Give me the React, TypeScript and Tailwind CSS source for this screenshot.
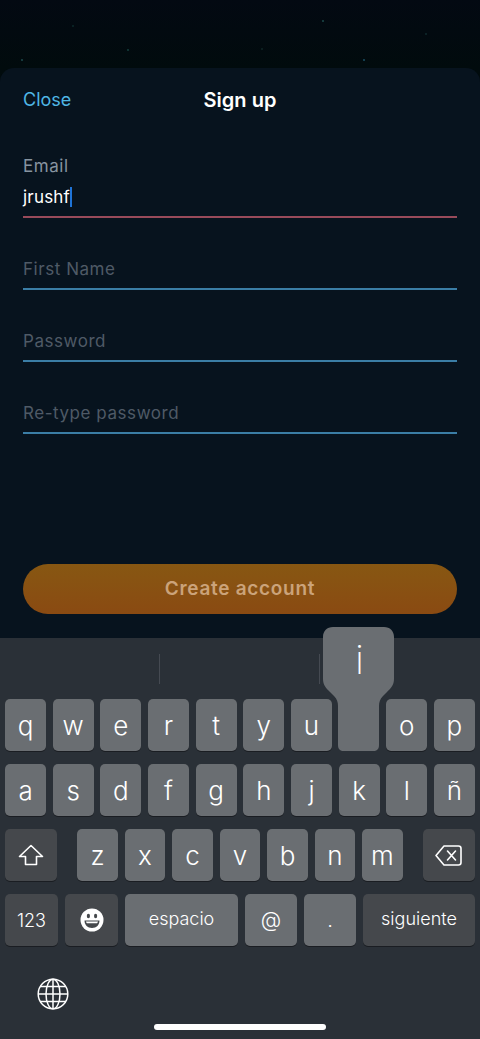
const STARS = [
  { x: 72, y: 25, c: 'bg-[#0c2a2a]' },
  { x: 322, y: 20, c: 'bg-[#1c4a4a]' },
  { x: 425, y: 33, c: 'bg-[#0f2a2c]' },
  { x: 127, y: 49, c: 'bg-[#14403e]' },
  { x: 261, y: 48, c: 'bg-[#0f2626]' },
  { x: 21, y: 59, c: 'bg-[#1c4a4c]' },
  { x: 363, y: 59, c: 'bg-[#1a4f63]' },
];

function Field({ label, value, error }: { label: string; value?: string; error?: boolean }) {
  return (
    <div className="flex h-[72px] flex-col justify-end tracking-[0.55px]">
      {value !== undefined ? (
        <>
          <div className="mb-[5px] h-[26px] text-[17px] leading-[26px] text-[#8794a0]">{label}</div>
          <div className="flex h-[26px] items-center text-[17px] leading-[26px] tracking-[0.2px] text-white">
            {value}
            <span className="h-[20px] w-[2px] bg-[#1f74d8]" />
          </div>
        </>
      ) : (
        <div className="h-[26px] text-[17px] leading-[26px] text-[#4f5a66]">{label}</div>
      )}
      <div className={`mt-[6px] h-[2px] ${error ? 'bg-[#984a5a]' : 'bg-[#3b7ea6]'}`} />
    </div>
  );
}

function Key({ label, className = '' }: { label: string; className?: string }) {
  return (
    <div
      className={`flex h-[52px] items-center justify-center rounded-[5px] bg-[#6a6e72] text-[26px] font-light text-white shadow-[0_1px_0_#1a1d22] ${className}`}
    >
      {label}
    </div>
  );
}

function DarkKey({ children, className = '' }: { children: React.ReactNode; className?: string }) {
  return (
    <div
      className={`flex h-[52px] items-center justify-center rounded-[5px] bg-[#45484c] text-white shadow-[0_1px_0_#1a1d22] ${className}`}
    >
      {children}
    </div>
  );
}

function Popup() {
  return (
    <div className="absolute left-[-16px] top-[-72px] h-[124px] w-[71px]">
      <svg width="71" height="124" viewBox="0 0 71 124" className="absolute inset-0">
        <path
          d="M10 0H61C67 0 71 4 71 10V52C71 58 68 61 64 65L60 69C57 72 56 75 56 79V118C56 122 54 124 50 124H21C17 124 15 122 15 118V79C15 75 14 72 11 69L7 65C3 61 0 58 0 52V10C0 4 4 0 10 0Z"
          fill="#6a6e72"
        />
      </svg>
      <div className="absolute inset-x-0 top-[8px] pl-[3px] text-center text-[40px] font-extralight leading-[50px] text-white">
        i
      </div>
    </div>
  );
}

export default function App() {
  const rowOne = ['q', 'w', 'e', 'r', 't', 'y', 'u', 'i', 'o', 'p'];
  const rowTwo = ['a', 's', 'd', 'f', 'g', 'h', 'j', 'k', 'l', 'ñ'];
  const rowThree = ['z', 'x', 'c', 'v', 'b', 'n', 'm'];

  return (
    <div className="flex h-[1039px] w-[480px] flex-col overflow-hidden bg-[#010b0d] font-['Inter',sans-serif]">
      {/* Stars behind the sheet */}
      <div className="relative h-[68px] bg-gradient-to-b from-[#030912] to-[#010b0d]">
        {STARS.map((s) => (
          <span
            key={`${s.x}-${s.y}`}
            className={`absolute h-[2px] w-[2px] rounded-full ${s.c}`}
            style={{ left: s.x, top: s.y }}
          />
        ))}
      </div>

      <div className="flex h-[570px] flex-col rounded-t-[14px] bg-[#07131e] px-[23px]">
        <div className="relative mt-[18px] flex h-[26px] items-center justify-center">
          <span className="absolute left-0 text-[18px] text-[#4fb6e4]">Close</span>
          <span className="mt-[2px] text-[20px] font-semibold text-white">Sign up</span>
        </div>

        <div className="mt-[34px]">
          <Field label="Email" value="jrushf" error />
          <Field label="First Name" />
          <Field label="Password" />
          <Field label="Re-type password" />
        </div>

        <div className="mt-[130px] flex h-[50px] items-center justify-center rounded-full bg-gradient-to-b from-[#875712] to-[#8a4a12] text-[19px] font-semibold tracking-[0.7px] text-[#cba37a]">
          Create account
        </div>
      </div>

      {/* Keyboard */}
      <div className="flex flex-1 flex-col bg-[#2a3037]">
        <div className="flex h-[61px] items-center">
          <span className="ml-[159px] h-[30px] w-px bg-[#454a52]" />
          <span className="ml-[159px] h-[30px] w-px bg-[#454a52]" />
        </div>

        <div className="flex gap-[6.6px] px-[5px]">
          {rowOne.map((k) =>
            k === 'i' ? (
              <div key={k} className="relative flex-1">
                <Popup />
              </div>
            ) : (
              <Key key={k} label={k} className="flex-1" />
            ),
          )}
        </div>

        <div className="mt-[13px] flex gap-[6.6px] px-[5px]">
          {rowTwo.map((k) => (
            <Key key={k} label={k} className="flex-1" />
          ))}
        </div>

        <div className="mt-[13px] flex items-center justify-between px-[5px]">
          <DarkKey className="w-[52px]">
            <svg width="26" height="22" viewBox="0 0 26 22" fill="none" stroke="white" strokeWidth="1.6" strokeLinejoin="round">
              <path d="M13 1.5L1.5 12.5H7.5V20.5H18.5V12.5H24.5L13 1.5Z" />
            </svg>
          </DarkKey>
          <div className="flex gap-[7.1px]">
            {rowThree.map((k) => (
              <Key key={k} label={k} className="w-[40.4px]" />
            ))}
          </div>
          <DarkKey className="w-[52px]">
            <svg width="27" height="21" viewBox="0 0 27 21" fill="none" stroke="white" strokeWidth="1.6" strokeLinejoin="round" strokeLinecap="round">
              <path d="M9 1H23.5C25 1 26 2 26 3.5V17.5C26 19 25 20 23.5 20H9L1 10.5L9 1Z" />
              <path d="M12.5 6L20.5 15M20.5 6L12.5 15" />
            </svg>
          </DarkKey>
        </div>

        <div className="mt-[13px] flex gap-[7px] px-[5px]">
          <DarkKey className="w-[53px] text-[18px] font-light">123</DarkKey>
          <DarkKey className="w-[53px]">
            <svg width="24" height="24" viewBox="0 0 24 24">
              <circle cx="12" cy="12" r="11.5" fill="white" />
              <ellipse cx="8.4" cy="8" rx="1.6" ry="2.3" fill="#45484c" />
              <ellipse cx="15.6" cy="8" rx="1.6" ry="2.3" fill="#45484c" />
              <path d="M4.5 12.5H19.5C19.5 17 16.5 20 12 20C7.5 20 4.5 17 4.5 12.5Z" fill="#45484c" />
              <path d="M6 13.5H18C17.6 14.6 17.3 15 17 15.3H7C6.6 15 6.3 14.6 6 13.5Z" fill="white" />
            </svg>
          </DarkKey>
          <Key label="espacio" className="w-[113px] pb-[3px] !text-[18px]" />
          <Key label="@" className="w-[52px] !text-[21px]" />
          <Key label="." className="w-[52px] !text-[20px]" />
          <DarkKey className="flex-1 pb-[3px] text-[18px] font-light">siguiente</DarkKey>
        </div>

        <div className="relative flex-1">
          <div className="absolute left-[37px] top-[32px]">
            <svg width="32" height="32" viewBox="0 0 32 32" fill="none" stroke="white" strokeWidth="1.5">
              <circle cx="16" cy="16" r="14.8" />
              <ellipse cx="16" cy="16" rx="7" ry="14.8" />
              <path d="M16 1.2V30.8M1.2 16H30.8M3.5 8.5H28.5M3.5 23.5H28.5" />
            </svg>
          </div>
          <div className="absolute bottom-[9px] left-[154px] h-[6px] w-[172px] rounded-full bg-white" />
        </div>
      </div>
    </div>
  );
}
